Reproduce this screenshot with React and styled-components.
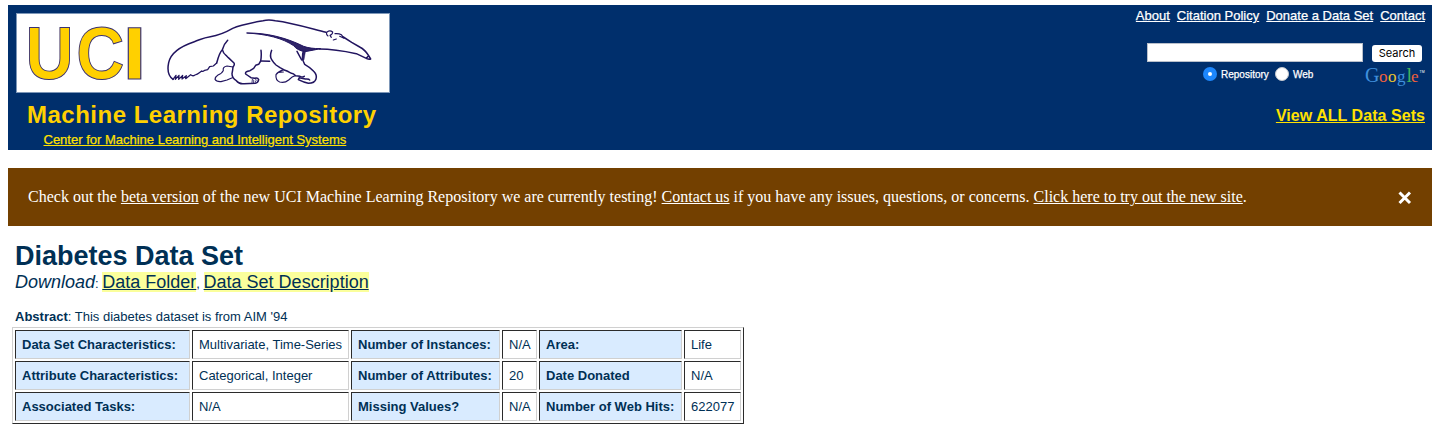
import React from "react";
import styled, { createGlobalStyle } from "styled-components";

const Global = createGlobalStyle`
  * { box-sizing: border-box; }
  body { margin: 0; background: #fff; color: #003055; font-family: "Liberation Sans", Arial, sans-serif; }
`;
const Page = styled.div`
  height: 436px; padding: 5px 8px 0; overflow: hidden;
`;
const Header = styled.header`
  height: 145px; background: #002f6c; display: flex; justify-content: space-between;
`;
const Brand = styled.div`
  padding: 8px 0 0 8px; display: flex; flex-direction: column;
`;
const Logo = styled.svg`
  display: block; width: 374px; height: 80px; background: #fff; border: 1px solid #7d97b8; overflow: visible;
`;
const Title = styled.svg`
  display: block; width: 374px; height: 37px;
`;
const Center = styled.a`
  color: #ffe100; font-size: 13px; line-height: 15px; -webkit-text-stroke: 0.25px #ffe100;
  text-decoration: underline; margin: 2px 0 0 27.5px; white-space: nowrap;
`;
const Tools = styled.div`
  padding: 3px 6px 0 0; display: flex; flex-direction: column; align-items: flex-end;
`;
const Nav = styled.nav`
  display: flex; gap: 7px; font-size: 13px; line-height: 15px; height: 35px; margin-right: 1px;
  -webkit-text-stroke: 0.25px #fff;
`;
const NavLink = styled.a`
  color: #fff; text-decoration: underline; white-space: nowrap;
`;
const SearchRow = styled.div`
  display: flex; align-items: center; gap: 9px; height: 19px; padding-right: 4px;
`;
const Field = styled.input`
  width: 216px; height: 19px; border: 1px solid #b9c0cb; background: #fff; padding: 0; margin: 0;
`;
const SearchButton = styled.button`
  width: 50px; height: 17px; border: 0; border-radius: 3px; background: #fff; color: #000; padding: 0;
  font: 11px/17px Inter, "Liberation Sans", sans-serif; margin-top: 1px;
`;
const Options = styled.div`
  display: flex; align-items: center; height: 24px; width: 223px; font-size: 10px; color: #fff;
  -webkit-text-stroke: 0.25px #fff;
`;
const Radio = styled.span`
  width: 14px; height: 14px; border-radius: 50%; flex: none; display: grid; place-items: center;
  background: ${(p) => (p.$on ? "#1d87fd" : "#fff")}; border: ${(p) => (p.$on ? "0" : "1px solid #c5c9cf")};
  &::after { content: ""; width: 4px; height: 4px; border-radius: 50%; background: #fff; }
`;
const OptionText = styled.label`
  margin: 0 5px 0 4px; white-space: nowrap; width: ${(p) => p.$w}px;
`;
const Google = styled.svg`
  width: 62px; height: 24px; margin: 9px 0 0 auto; overflow: visible;
`;
const ViewAll = styled.a`
  color: #ffe100; font-size: 16px; font-weight: bold; text-decoration: underline; line-height: 18px;
  margin: 21px 1px 0 0; white-space: nowrap; letter-spacing: 0.05px;
`;
const Notice = styled.section`
  margin-top: 18px; height: 58px; background: #734000; color: #fff; padding: 0 20px;
  display: flex; align-items: center; justify-content: space-between;
  font: 16px/18px "Liberation Serif", "Times New Roman", serif;
  a { color: inherit; text-decoration: underline; }
`;
const NoticeText = styled.p`
  margin: 0; white-space: nowrap;
`;
const Close = styled.svg`
  width: 14px; height: 14px; margin-top: 2px;
`;
const Main = styled.main`
  padding: 14px 0 0 7px;
`;
const Heading = styled.h1`
  margin: 0; font-size: 27px; line-height: 32px; white-space: nowrap;
`;
const Download = styled.p`
  margin: 0; font-size: 18px; line-height: 20px; white-space: nowrap;
  small { font-size: 13px; }
`;
const FileLink = styled.a`
  background: #fbff9c; text-decoration: underline; color: inherit;
`;
const Abstract = styled.p`
  margin: 15px 0 3px; font-size: 13px; line-height: 15px;
`;
const Table = styled.table`
  margin-left: -3px; width: 732px; table-layout: fixed; border-collapse: separate; border-spacing: 2px;
  border: 1px solid; border-color: #d0d0d0 #2b2b2b #2b2b2b #d0d0d0; font-size: 13px;
`;
const Cell = styled.td`
  height: 29px; padding: 0 6px; line-height: 15px; white-space: nowrap;
  border: 1px solid; border-color: #2b2b2b #d0d0d0 #d0d0d0 #2b2b2b;
  background: ${(p) => (p.$label ? "#d9ebff" : "#fff")}; font-weight: ${(p) => (p.$label ? "bold" : "normal")};
`;

const columns = [175, 157, 149, 35, 143, 57];
const rows = [
  ["Data Set Characteristics:", "Multivariate, Time-Series", "Number of Instances:", "N/A", "Area:", "Life"],
  ["Attribute Characteristics:", "Categorical, Integer", "Number of Attributes:", "20", "Date Donated", "N/A"],
  ["Associated Tasks:", "N/A", "Missing Values?", "N/A", "Number of Web Hits:", "622077"],
];
const googleLetters = [
  ["G", 0, 20, "#3f8fdc"], ["o", 14, 17, "#f0603c"], ["o", 23, 17, "#e8c52e"],
  ["g", 32, 17, "#3f8fdc"], ["l", 41.5, 20, "#43b35c"], ["e", 46, 17, "#f0603c"],
];
const uciLetters = [["U", 8.5, 0.9], ["C", 59.3, 0.9], ["I", 105.5, 1.17]];

function Anteater() {
  return (
    <g transform="translate(143 -14) scale(.333333)" fill="none" stroke="#21145f" strokeWidth="4.5" strokeLinecap="round" strokeLinejoin="round">
      <path d="M39 238 C25 228 22 207 26 188 C32 157 67 137 103 125 C123 118 130 113 151 110 C182 105 199 96 218 85 C243 74 278 68 309 62 Q326 58 346 62 C397 68 444 83 498 97" />
      <path d="M39 238 L48 226 L46 238 L57 226 L56 238 L68 226 L66 237 L79 227 L77 236 L92 224 Q98 230 105 225 Q112 223 118 218 L125 213 Q128 216 134 211 L143 209 L149 200 L160 198 L170 189" strokeWidth="3.8" />
      <path d="M170 189 C174 174 178 158 187 149 Q192 132 203 121 M187 149 Q190 161 198 166 L205 173 L222 189 Q225 195 219 201 Q218 212 216 221 Q216 234 229 242 Q238 253 252 251 L286 250 Q294 249 296 239 Q293 232 284 235 L273 233 Q262 226 257 222 Q254 214 270 212 L281 205 L287 196 L296 193 L302 183 Q305 166 303 151" />
      <path d="M219 201 L201 198 Q187 201 190 211 Q187 219 174 225 Q166 230 165 238 Q169 246 183 245 L201 240 L217 233" strokeWidth="3.5" />
      <path d="M276 248 L277 238 Q284 239 281 248 M286 247 Q291 242 287 236" strokeWidth="2.5" />
      <path d="M303 183 L329 184 M335 151 Q328 169 335 179 Q341 189 348 195 L360 203 L371 209 Q384 213 392 219 Q401 220 407 227 L420 229 Q429 233 433 229" />
      <path d="M371 209 Q355 214 348 224 Q346 241 359 246 Q374 250 386 240 Q397 229 406 227 M355 217 L370 216" strokeWidth="3.5" />
      <path d="M431 151 C426 165 425 178 434 193 Q449 201 461 214 Q472 225 468 237 Q464 250 445 250 Q431 247 415 239 L418 233 L436 237 Q447 236 449 240 M411 154 L425 180" />
      <path d="M261 99 C317 98 377 112 431 139 Q450 146 482 146 Q462 150 435 155 Q411 151 401 137 C366 114 322 103 261 99 Z" fill="#2e2368" strokeWidth="3" />
      <path d="M437 152 L432 180 L426 178 L429 156 Z" fill="#2e2368" strokeWidth="1" />
      <path d="M478 147 C517 147 552 153 589 161 L619 175 Q627 179 632 177 L626 167 Q615 149 599 141 L575 127 L550 111 M619 175 L625 168" />
      <path d="M504 108 Q496 102 502 95 Q510 90 518 96 Q518 103 510 106 L514 112 M525 101 Q537 100 544 104 L552 115 L539 109 M520 120 L529 117" strokeWidth="3.5" />
    </g>
  );
}

export default function App() {
  return (
    <Page>
      <Global />
      <Header>
        <Brand>
          <Logo viewBox="0 0 372 78" aria-label="UCI">
            {uciLetters.map(([c, x, sx]) => (
              <text key={c} transform={`translate(${x} 64.7) scale(${sx} 1)`} fontFamily="Liberation Sans, Arial, sans-serif" fontWeight="bold" fontSize="74" fill="#ffd000" stroke="#3b3270" strokeWidth="1">{c}</text>
            ))}
            <Anteater />
          </Logo>
          <Title viewBox="0 0 374 37">
            <text x="11" y="30" textLength="349" lengthAdjust="spacing" fontFamily="Liberation Sans, Arial, sans-serif" fontWeight="bold" fontSize="24" fill="#ffd000">Machine Learning Repository</text>
          </Title>
          <Center>Center for Machine Learning and Intelligent Systems</Center>
        </Brand>
        <Tools>
          <Nav>
            <NavLink>About</NavLink>
            <NavLink>Citation Policy</NavLink>
            <NavLink>Donate a Data Set</NavLink>
            <NavLink>Contact</NavLink>
          </Nav>
          <SearchRow>
            <Field aria-label="Search" />
            <SearchButton>Search</SearchButton>
          </SearchRow>
          <Options>
            <Radio $on />
            <OptionText $w={49}>Repository</OptionText>
            <Radio />
            <OptionText $w={22}>Web</OptionText>
            <Google viewBox="0 0 62 24">
              {googleLetters.map(([c, x, size, fill], i) => (
                <text key={i} x={x + 1} y="14.5" fontFamily="Liberation Serif, serif" fontSize={size} fill={fill} style={{ WebkitTextStroke: `0.3px ${fill}` }}>{c}</text>
              ))}
              <text x="55.5" y="6" fontFamily="Liberation Sans, sans-serif" fontSize="3.5" fill="#fff">TM</text>
            </Google>
          </Options>
          <ViewAll>View ALL Data Sets</ViewAll>
        </Tools>
      </Header>
      <Notice>
        <NoticeText>
          Check out the <a>beta version</a> of the new UCI Machine Learning Repository we are currently testing! <a>Contact us</a> if you have any issues, questions, or concerns. <a>Click here to try out the new site</a>.
        </NoticeText>
        <Close viewBox="0 0 14 14"><path d="M1.5 1.5 12 12M12 1.5 1.5 12" stroke="#fff" strokeWidth="3" /></Close>
      </Notice>
      <Main>
        <Heading>Diabetes Data Set</Heading>
        <Download>
          <em>Download</em><small>: </small><FileLink>Data Folder</FileLink><small>, </small><FileLink>Data Set Description</FileLink>
        </Download>
        <Abstract><b>Abstract</b>: This diabetes dataset is from AIM '94</Abstract>
        <Table>
          <colgroup>{columns.map((w, i) => <col key={i} style={{ width: w }} />)}</colgroup>
          <tbody>
            {rows.map((row) => (
              <tr key={row[0]}>
                {row.map((text, i) => <Cell key={i} $label={i % 2 === 0}>{text}</Cell>)}
              </tr>
            ))}
          </tbody>
        </Table>
      </Main>
    </Page>
  );
}
